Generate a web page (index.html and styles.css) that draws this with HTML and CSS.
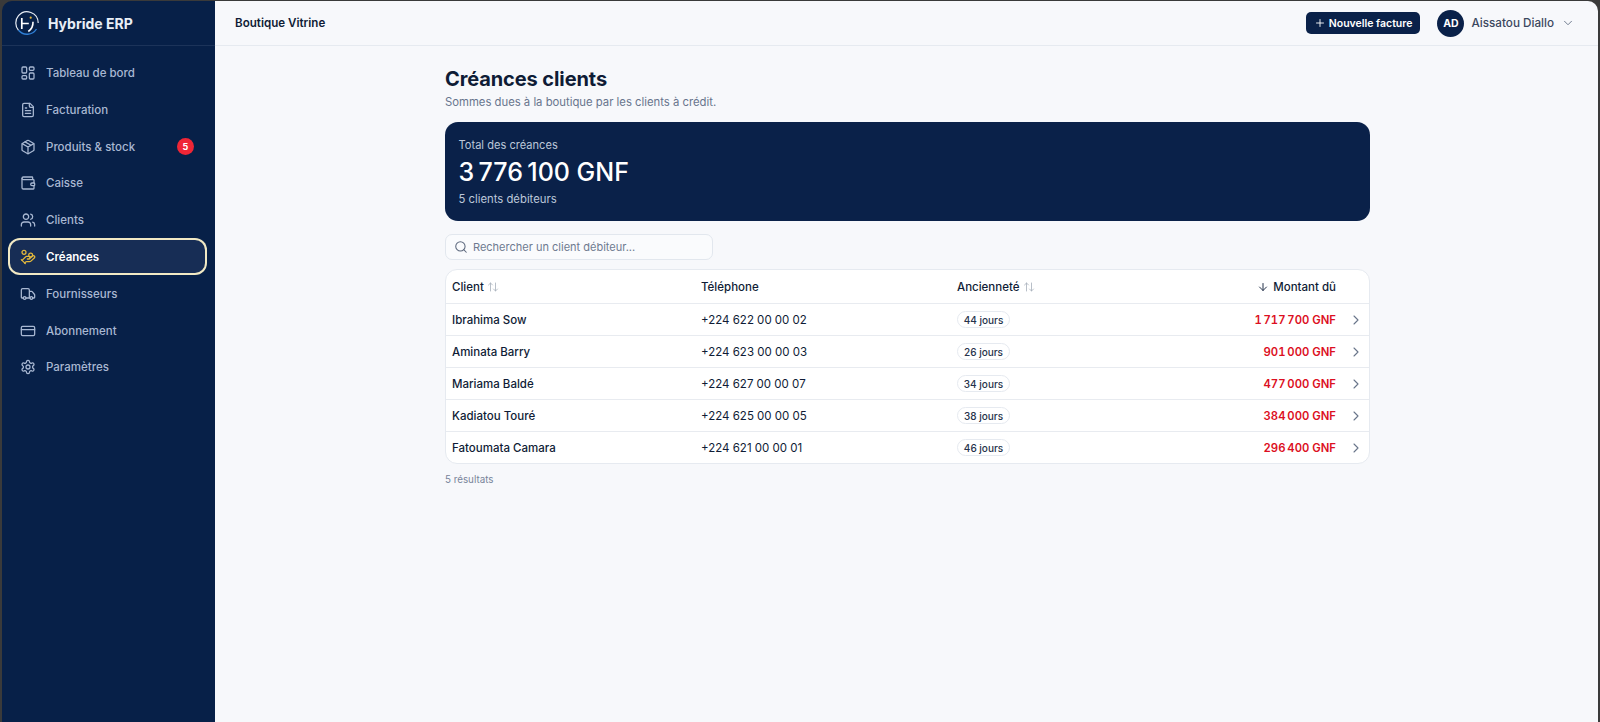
FILE: index.html
```html
<!DOCTYPE html>
<html lang="fr">
<head>
<meta charset="utf-8">
<title>Créances clients</title>
<link rel="stylesheet" href="styles.css">
</head>
<body>
<div class="window">
  <aside class="sidebar">
    <div class="brand">
      <svg class="logo" viewBox="0 0 24 24" fill="none"><path d="M23.2 12A11.2 11.2 0 0 0 3.5 4.7A11.2 11.2 0 0 0 3.5 19.3" stroke="#e8edf5" stroke-width="1.2"/><path d="M3.5 19.3A11.2 11.2 0 0 0 21.5 18" stroke="#2f7fd6" stroke-width="1.4"/><path d="M6.8 7v11M6.8 12.500h7" stroke="#fff" stroke-width="1.7"/><path d="M18 10.700c.2 4-1.500 7.500-4.700 9.800" stroke="#fff" stroke-width="1.6"/><circle cx="15.700" cy="6.700" r="1.100" fill="#e8b93a" stroke="none"/></svg>
      <span class="brand-name">Hybride ERP</span>
    </div>
    <nav class="nav">
      <a class="nav-item"><svg class="ic" viewBox="0 0 24 24"><rect x="3" y="3" width="7" height="9" rx="1.500"/><rect x="14" y="3" width="7" height="5" rx="1.500"/><rect x="14" y="12" width="7" height="9" rx="1.500"/><rect x="3" y="16" width="7" height="5" rx="1.500"/></svg><span>Tableau de bord</span></a>
      <a class="nav-item"><svg class="ic" viewBox="0 0 24 24"><path d="M15 2H6a2 2 0 0 0-2 2v16a2 2 0 0 0 2 2h12a2 2 0 0 0 2-2V7z"/><path d="M14 2v4a2 2 0 0 0 2 2h4M10 9H8M16 13H8M16 17H8"/></svg><span>Facturation</span></a>
      <a class="nav-item"><svg class="ic" viewBox="0 0 24 24"><path d="M11 21.730a2 2 0 0 0 2 0l7-4A2 2 0 0 0 21 16V8a2 2 0 0 0-1-1.730l-7-4a2 2 0 0 0-2 0l-7 4A2 2 0 0 0 3 8v8a2 2 0 0 0 1 1.730z"/><path d="M12 22V12M3.290 7 12 12l8.710-5M7.500 4.270l9 5.150"/></svg><span>Produits &amp; stock</span><b class="badge">5</b></a>
      <a class="nav-item"><svg class="ic" viewBox="0 0 24 24"><path d="M19 7V4a1 1 0 0 0-1-1H5a2 2 0 0 0 0 4h15a1 1 0 0 1 1 1v4h-3a2 2 0 0 0 0 4h3a1 1 0 0 0 1-1v-2a1 1 0 0 0-1-1"/><path d="M3 5v14a2 2 0 0 0 2 2h15a1 1 0 0 0 1-1v-4"/></svg><span>Caisse</span></a>
      <a class="nav-item"><svg class="ic" viewBox="0 0 24 24"><path d="M16 21v-2a4 4 0 0 0-4-4H6a4 4 0 0 0-4 4v2"/><circle cx="9" cy="7" r="4"/><path d="M22 21v-2a4 4 0 0 0-3-3.870M16 3.130a4 4 0 0 1 0 7.750"/></svg><span>Clients</span></a>
      <a class="nav-item active"><svg class="ic" viewBox="0 0 24 24"><path d="M11 15h2a2 2 0 1 0 0-4h-3c-.6 0-1.100.2-1.400.6L3 17"/><path d="m7 21 1.600-1.400c.3-.4.800-.6 1.400-.6h4c1.100 0 2.100-.4 2.800-1.200l4.600-4.400a2 2 0 0 0-2.750-2.910l-4.200 3.900"/><path d="m2 16 6 6"/><circle cx="16" cy="9" r="2.900"/><circle cx="6" cy="5" r="3"/></svg><span>Créances</span></a>
      <a class="nav-item"><svg class="ic" viewBox="0 0 24 24"><path d="M14 18V6a2 2 0 0 0-2-2H4a2 2 0 0 0-2 2v11a1 1 0 0 0 1 1h2M15 18H9M19 18h2a1 1 0 0 0 1-1v-3.650a1 1 0 0 0-.22-.62l-3.480-4.350A1 1 0 0 0 17.520 8H14"/><circle cx="17" cy="18" r="2"/><circle cx="7" cy="18" r="2"/></svg><span>Fournisseurs</span></a>
      <a class="nav-item"><svg class="ic" viewBox="0 0 24 24"><rect x="2" y="5" width="20" height="14" rx="2"/><path d="M2 10h20"/></svg><span>Abonnement</span></a>
      <a class="nav-item"><svg class="ic" viewBox="0 0 24 24"><path d="M12.220 2h-.44a2 2 0 0 0-2 2v.18a2 2 0 0 1-1 1.730l-.43.250a2 2 0 0 1-2 0l-.15-.08a2 2 0 0 0-2.730.730l-.22.380a2 2 0 0 0 .730 2.730l.15.100a2 2 0 0 1 1 1.720v.510a2 2 0 0 1-1 1.740l-.15.090a2 2 0 0 0-.730 2.730l.22.380a2 2 0 0 0 2.730.730l.15-.08a2 2 0 0 1 2 0l.43.250a2 2 0 0 1 1 1.730V20a2 2 0 0 0 2 2h.44a2 2 0 0 0 2-2v-.18a2 2 0 0 1 1-1.730l.43-.250a2 2 0 0 1 2 0l.15.080a2 2 0 0 0 2.730-.730l.22-.390a2 2 0 0 0-.730-2.730l-.15-.080a2 2 0 0 1-1-1.740v-.500a2 2 0 0 1 1-1.740l.15-.090a2 2 0 0 0 .730-2.730l-.22-.380a2 2 0 0 0-2.730-.730l-.15.080a2 2 0 0 1-2 0l-.43-.250a2 2 0 0 1-1-1.730V4a2 2 0 0 0-2-2z"/><circle cx="12" cy="12" r="3"/></svg><span>Paramètres</span></a>
    </nav>
  </aside>
  <div class="main">
    <header class="topbar">
      <span class="shop">Boutique Vitrine</span>
      <div class="top-actions">
        <button class="new-btn"><svg class="plus" viewBox="0 0 24 24"><path d="M5 12h14M12 5v14"/></svg>Nouvelle facture</button>
        <div class="user">
          <span class="avatar">AD</span>
          <span class="user-name">Aissatou Diallo</span>
          <svg class="chev" viewBox="0 0 24 24"><path d="m6 9 6 6 6-6"/></svg>
        </div>
      </div>
    </header>
    <main class="content">
      <h1 class="title">Créances clients</h1>
      <p class="subtitle">Sommes dues à la boutique par les clients à crédit.</p>
      <section class="total">
        <div class="total-label">Total des créances</div>
        <div class="total-value">3&#8239;776&#8239;100 GNF</div>
        <div class="total-note">5 clients débiteurs</div>
      </section>
      <div class="search">
        <svg class="search-ic" viewBox="0 0 24 24"><circle cx="11" cy="11" r="8"/><path d="m21 21-4.300-4.300"/></svg>
        <span>Rechercher un client débiteur...</span>
      </div>
      <div class="table">
        <div class="row head">
          <span class="c1">Client <svg class="sort" viewBox="0 0 24 24"><path d="m21 16-4 4-4-4M17 20V4M3 8l4-4 4 4M7 4v16"/></svg></span>
          <span class="c2">Téléphone</span>
          <span class="c3">Ancienneté <svg class="sort" viewBox="0 0 24 24"><path d="m21 16-4 4-4-4M17 20V4M3 8l4-4 4 4M7 4v16"/></svg></span>
          <span class="c4"><svg class="down" viewBox="0 0 24 24"><path d="M12 5v14M19 12l-7 7-7-7"/></svg> Montant dû</span>
          <span class="c5"></span>
        </div>
        <div class="row"><span class="c1 name">Ibrahima Sow</span><span class="c2">+224 622 00 00 02</span><span class="c3"><em class="pill">44 jours</em></span><span class="c4 amount">1&#8239;717&#8239;700 GNF</span><span class="c5"><svg class="next" viewBox="0 0 24 24"><path d="m9 18 6-6-6-6"/></svg></span></div>
        <div class="row"><span class="c1 name">Aminata Barry</span><span class="c2">+224 623 00 00 03</span><span class="c3"><em class="pill">26 jours</em></span><span class="c4 amount">901&#8239;000 GNF</span><span class="c5"><svg class="next" viewBox="0 0 24 24"><path d="m9 18 6-6-6-6"/></svg></span></div>
        <div class="row"><span class="c1 name">Mariama Baldé</span><span class="c2">+224 627 00 00 07</span><span class="c3"><em class="pill">34 jours</em></span><span class="c4 amount">477&#8239;000 GNF</span><span class="c5"><svg class="next" viewBox="0 0 24 24"><path d="m9 18 6-6-6-6"/></svg></span></div>
        <div class="row"><span class="c1 name">Kadiatou Touré</span><span class="c2">+224 625 00 00 05</span><span class="c3"><em class="pill">38 jours</em></span><span class="c4 amount">384&#8239;000 GNF</span><span class="c5"><svg class="next" viewBox="0 0 24 24"><path d="m9 18 6-6-6-6"/></svg></span></div>
        <div class="row"><span class="c1 name">Fatoumata Camara</span><span class="c2">+224 621 00 00 01</span><span class="c3"><em class="pill">46 jours</em></span><span class="c4 amount">296&#8239;400 GNF</span><span class="c5"><svg class="next" viewBox="0 0 24 24"><path d="m9 18 6-6-6-6"/></svg></span></div>
      </div>
      <p class="count">5 résultats</p>
    </main>
  </div>
</div>
</body>
</html>
```
FILE: styles.css
```css
* { box-sizing: border-box; }
html, body { height: 100%; margin: 0; }
body {
  background: #3a3a3a;
  font-family: "Inter", "Liberation Sans", sans-serif;
  color: #0f1c36;
  overflow: hidden;
}
.window {
  display: flex;
  height: 722px;
  padding: 1px 2px 0 2px;
}
svg { fill: none; stroke: currentColor; stroke-width: 2; stroke-linecap: round; stroke-linejoin: round; flex: none; }
.sidebar {
  width: 213px;
  flex: none;
  background: #072048;
  border-top-left-radius: 10px;
  color: #a9b8d2;
}
.brand {
  height: 45px;
  display: flex;
  align-items: center;
  gap: 9px;
  padding-left: 13px;
  border-bottom: 1px solid #1c3359;
}
.logo { width: 24px; height: 24px; stroke-linecap: butt; }
.brand-name { font-size: 14px; font-weight: 700; color: #e9eef6; }
.nav { display: flex; flex-direction: column; gap: 3.8px; padding: 10.5px 10px 0 8px; }
.nav-item {
  height: 33px;
  display: flex;
  align-items: center;
  gap: 10px;
  padding: 0 12px 0 10px;
  font-size: 11.5px;
  font-weight: 500;
  border-radius: 10px;
}
.ic { width: 16px; height: 16px; stroke-width: 1.9; }
.nav-item span { flex: 1; }
.badge {
  width: 17px;
  height: 17px;
  border-radius: 50%;
  background: #ef2636;
  color: #fff;
  font-size: 9px;
  font-weight: 700;
  display: flex;
  align-items: center;
  justify-content: center;
  margin-right: -1px;
}
.active {
  background: #172d55;
  color: #fff;
  font-weight: 600;
  box-shadow: 0 0 0 2px #f1e9c4;
}
.active .ic { color: #e4b93c; }
.main { flex: 1; display: flex; flex-direction: column; background: #f7f8fb; border-top-right-radius: 10px; min-width: 0; }
.topbar {
  height: 45px;
  flex: none;
  display: flex;
  align-items: center;
  justify-content: space-between;
  padding: 0 23px 0 20px;
  border-bottom: 1px solid #e6eaf0;
}
.shop { font-size: 11.6px; font-weight: 600; color: #0f1c36; }
.top-actions { display: flex; align-items: center; gap: 17px; }
.new-btn {
  height: 22px;
  display: flex;
  align-items: center;
  gap: 3px;
  padding: 0 8px;
  border: 0;
  border-radius: 5px;
  background: #0a2149;
  color: #fff;
  font: 600 10.5px "Inter", "Liberation Sans", sans-serif;
}
.plus { width: 12px; height: 12px; stroke-width: 1.8; }
.user { display: flex; align-items: center; gap: 7px; }
.avatar {
  width: 27px;
  height: 27px;
  border-radius: 50%;
  background: #0a2149;
  color: #fff;
  font-size: 10.5px;
  font-weight: 700;
  display: flex;
  align-items: center;
  justify-content: center;
}
.user-name { font-size: 11.7px; font-weight: 500; color: #3b475e; }
.chev { width: 14px; height: 14px; margin-left: 0; color: #69758a; stroke-width: 1.6; }
.content { width: 925px; margin-left: 230px; padding-top: 21px; }
.title { margin: 0; font-size: 20px; line-height: 24px; font-weight: 700; color: #0f1c36; letter-spacing: -.1px; }
.subtitle { margin: 3px 0 0; font-size: 11.3px; line-height: 16px; color: #68758d; }
.total {
  margin-top: 12px;
  height: 99px;
  padding: 15px 13.5px 0;
  border-radius: 13px;
  background: #0a2149;
  color: #fff;
}
.total-label, .total-note { line-height: 16px; color: #bcc7d9; }
.total-label { font-size: 11.1px; }
.total-note { font-size: 11.3px; }
.total-value { font-size: 25px; line-height: 34px; font-weight: 500; margin: 2px 0; }
.search {
  margin-top: 12.5px;
  width: 268px;
  height: 26px;
  display: flex;
  align-items: center;
  gap: 5px;
  padding-left: 8px;
  border: 1px solid #e2e7ee;
  border-radius: 7px;
  background: #fafbfd;
  font-size: 11px;
  color: #6e7a90;
}
.search-ic { width: 14px; height: 14px; color: #5c687d; stroke-width: 1.8; }
.table {
  margin-top: 9.5px;
  background: #fff;
  border: 1px solid #e6eaf0;
  border-radius: 12px;
  overflow: hidden;
}
.row {
  height: 32px;
  display: flex;
  align-items: center;
  border-top: 1px solid #e8ebf0;
  font-size: 11.5px;
}
.head { height: 33px; border-top: 0; font-weight: 500; }
.c1 { width: 255px; padding-left: 6px; display: flex; align-items: center; gap: 3px; }
.c2 { width: 256px; }
.c3 { width: 192px; display: flex; align-items: center; gap: 3px; }
.c4 { width: 187px; display: flex; justify-content: flex-end; align-items: center; gap: 4px; }
.c5 { flex: 1; display: flex; justify-content: flex-end; padding-right: 5px; }
.name { font-weight: 500; }
.sort { width: 12px; height: 12px; color: #a6aeba; stroke-width: 1.6; }
.down { width: 12px; height: 12px; color: #25324b; }
.pill {
  height: 17px;
  width: 53px;
  border: 1px solid #e6eaf0;
  border-radius: 9px;
  font-style: normal;
  font-size: 10px;
  font-weight: 500;
  color: #25324b;
  display: flex;
  align-items: center;
  justify-content: center;
}
.amount { color: #dc0f22; font-size: 11.3px; font-weight: 600; font-variant-numeric: tabular-nums; }
.next { width: 16px; height: 16px; color: #69758a; stroke-width: 1.6; }
.count { margin: 8.5px 0 0; font-size: 9.8px; line-height: 14px; color: #78849a; }
```
